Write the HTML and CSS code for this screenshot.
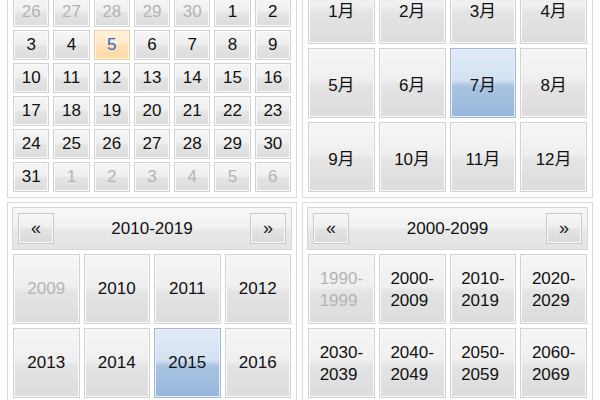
FILE: index.html
```html
<!DOCTYPE html>
<html lang="zh">
<head>
<meta charset="utf-8">
<title>Calendar views</title>
<link rel="stylesheet" href="styles.css">
</head>
<body>
<div class="board">
  <div class="panel">
    <div class="days">
      <div class="cell off">26</div><div class="cell off">27</div><div class="cell off">28</div><div class="cell off">29</div><div class="cell off">30</div><div class="cell">1</div><div class="cell">2</div>
      <div class="cell">3</div><div class="cell">4</div><div class="cell today">5</div><div class="cell">6</div><div class="cell">7</div><div class="cell">8</div><div class="cell">9</div>
      <div class="cell">10</div><div class="cell">11</div><div class="cell">12</div><div class="cell">13</div><div class="cell">14</div><div class="cell">15</div><div class="cell">16</div>
      <div class="cell">17</div><div class="cell">18</div><div class="cell">19</div><div class="cell">20</div><div class="cell">21</div><div class="cell">22</div><div class="cell">23</div>
      <div class="cell">24</div><div class="cell">25</div><div class="cell">26</div><div class="cell">27</div><div class="cell">28</div><div class="cell">29</div><div class="cell">30</div>
      <div class="cell">31</div><div class="cell off">1</div><div class="cell off">2</div><div class="cell off">3</div><div class="cell off">4</div><div class="cell off">5</div><div class="cell off">6</div>
    </div>
  </div>
  <div class="panel">
    <div class="quad">
      <div class="cell">1月</div><div class="cell">2月</div><div class="cell">3月</div><div class="cell">4月</div>
      <div class="cell">5月</div><div class="cell">6月</div><div class="cell sel">7月</div><div class="cell">8月</div>
      <div class="cell">9月</div><div class="cell">10月</div><div class="cell">11月</div><div class="cell">12月</div>
    </div>
  </div>
  <div class="panel">
    <div class="hdr">
      <div class="nav">&laquo;</div>
      <div class="title">2010-2019</div>
      <div class="nav">&raquo;</div>
    </div>
    <div class="quad">
      <div class="cell off">2009</div><div class="cell">2010</div><div class="cell">2011</div><div class="cell">2012</div>
      <div class="cell">2013</div><div class="cell">2014</div><div class="cell sel">2015</div><div class="cell">2016</div>
    </div>
  </div>
  <div class="panel">
    <div class="hdr">
      <div class="nav">&laquo;</div>
      <div class="title">2000-2099</div>
      <div class="nav">&raquo;</div>
    </div>
    <div class="quad">
      <div class="cell off"><span class="range">1990-1999</span></div><div class="cell"><span class="range">2000-2009</span></div><div class="cell"><span class="range">2010-2019</span></div><div class="cell"><span class="range">2020-2029</span></div>
      <div class="cell"><span class="range">2030-2039</span></div><div class="cell"><span class="range">2040-2049</span></div><div class="cell"><span class="range">2050-2059</span></div><div class="cell"><span class="range">2060-2069</span></div>
    </div>
  </div>
</div>
</body>
</html>
```
FILE: styles.css
```css
html, body {
  margin: 0;
  padding: 0;
  background: #ffffff;
}
body {
  font-family: "Liberation Sans", Arial, "Noto Sans CJK SC", sans-serif;
  font-size: 17px;
  color: #111111;
  overflow: hidden;
}
.board {
  display: grid;
  grid-template-columns: 290px 291px;
  column-gap: 5px;
  row-gap: 4px;
  padding-left: 7px;
  margin-top: -32px;
  align-items: end;
}
.panel {
  box-sizing: border-box;
  border: 1px solid #dadada;
  padding: 4px;
  background: #ffffff;
}
.days {
  display: grid;
  grid-template-columns: repeat(7, 1fr);
  grid-auto-rows: 30px;
  column-gap: 4px;
  row-gap: 3px;
  padding: 1px;
}
.quad {
  display: grid;
  grid-template-columns: repeat(4, 1fr);
  grid-auto-rows: 70px;
  gap: 4px;
  padding: 1px;
}
.cell {
  box-sizing: border-box;
  display: flex;
  align-items: center;
  justify-content: center;
  border: 1px solid #d2d2d2;
  box-shadow: inset 0 0 0 1px #f9f9f9;
  background: linear-gradient(to bottom, #f6f6f6 0%, #efefef 46%, #e4e4e4 54%, #dcdcdc 100%);
  color: #111111;
}
.cell.off {
  color: #b4b4b4;
}
.cell.today {
  border-color: #f4cf9c;
  box-shadow: inset 0 0 0 1px #fff6e8;
  background: linear-gradient(to bottom, #fff1dc 0%, #ffe9cb 46%, #fee0b6 54%, #fdd9a8 100%);
  color: #2a66d0;
}
.cell.sel {
  border-color: #9fbad8;
  box-shadow: inset 0 0 0 1px #e9f0f9;
  background: linear-gradient(to bottom, #e2ebf6 0%, #d3e1f1 46%, #a9c4e2 54%, #96b6da 100%);
}
.range {
  display: inline-block;
  width: min-content;
  text-align: left;
  line-height: 22px;
  padding-top: 2px;
}
.hdr {
  box-sizing: border-box;
  height: 43px;
  margin-bottom: 3px;
  border: 1px solid #d6d6d6;
  background: linear-gradient(to bottom, #f7f7f7 0%, #f1f1f1 46%, #e8e8e8 54%, #e4e4e4 100%);
  display: flex;
  align-items: center;
  justify-content: space-between;
  padding: 0 5px;
}
.title {
  color: #111111;
}
.nav {
  box-sizing: border-box;
  width: 36px;
  height: 31px;
  border: 1px solid #c8c8c8;
  box-shadow: inset 0 0 0 1px #fafafa;
  background: linear-gradient(to bottom, #f6f6f6 0%, #eeeeee 46%, #e2e2e2 54%, #dadada 100%);
  display: flex;
  align-items: center;
  justify-content: center;
  font-size: 18px;
  color: #222222;
}
```
